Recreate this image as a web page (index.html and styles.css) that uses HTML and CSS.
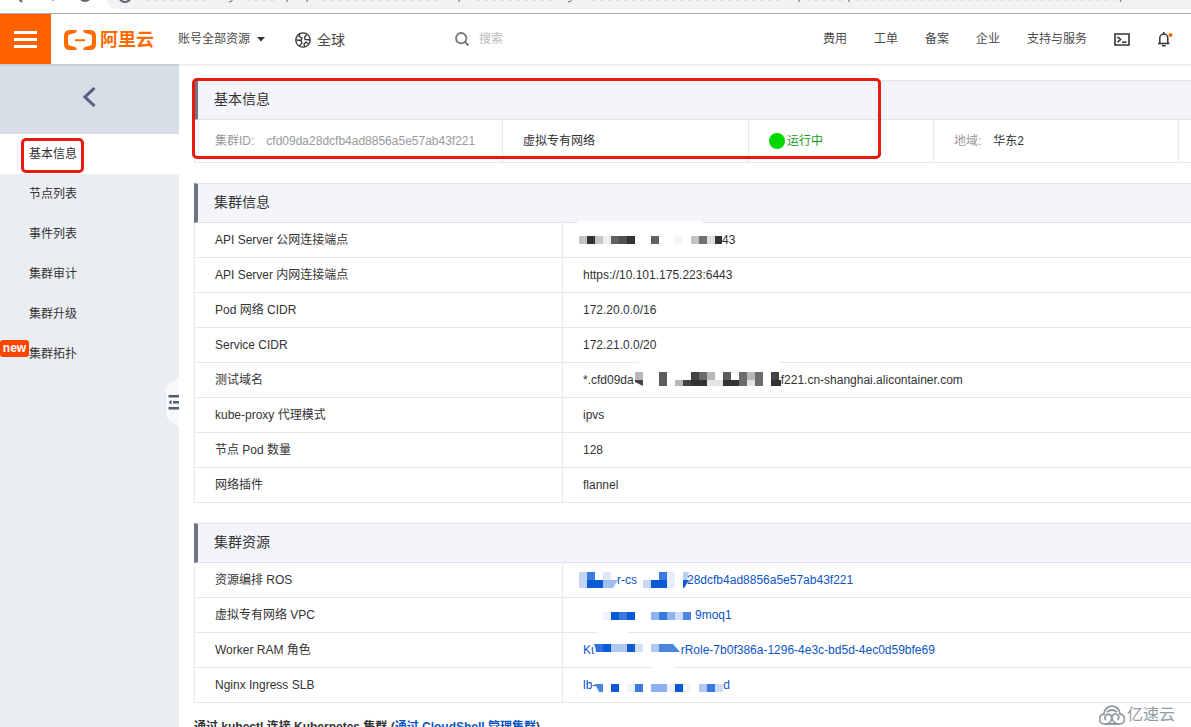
FILE: index.html
```html
<!DOCTYPE html>
<html lang="zh-CN">
<head>
<meta charset="utf-8">
<title>基本信息</title>
<link rel="stylesheet" href="styles.css">
</head>
<body>
<div class="browser-bar">
  <svg class="browser-icons" width="100" height="6" fill="none" stroke="#5f6368" stroke-width="2"><path d="M18-2l4 4M79-5a6 6 0 0 0 12 0"/><path d="M53-1v2" stroke="#aaa"/></svg>
  <div class="address">
    <svg width="1084" height="6" fill="none" stroke="#5f6368" stroke-width="2"><path d="M12-4a6 6 0 0 0 12 0"/><path stroke-width="1" d="M126-1q-1 3-4 3M352-1v3M465-1q-1 3-4 3M180-1v3M200-1v3M692-1v3M742-1v3M1014-1q0 2-1 3"/><path stroke="#c5c7ca" stroke-width="1" stroke-dasharray="3 5" d="M40 0h60M140 0h30M215 0h120M370 0h80M485 0h190M700 0h38M750 0h258"/></svg>
  </div>
</div>

<header class="topbar">
  <button class="menu" aria-label="菜单"><span></span><span></span><span></span></button>
  <a class="logo" href="#">
    <svg width="32" height="20" viewBox="0 0 32 20" fill="#ff6a00"><path d="M13 0H6Q0 0 0 6v8q0 6 6 6h7l-1.500-3L6 15.800Q4 15.500 4 13.500v-7Q4 4.500 6 4.200L11.500 3zM19 0h7q6 0 6 6v8q0 6-6 6h-7l1.500-3 5.500-1.200q2-.3 2-2.300v-7q0-2-2-2.300L20.500 3zM11 9.300h10v2H11z"/></svg>
    <span>阿里云</span>
  </a>
  <button class="account">账号全部资源<svg width="8" height="5"><path d="M0 0h8l-4 4.500z" fill="#333"/></svg></button>
  <button class="region">
    <svg width="16" height="16" viewBox="0 0 16 16" fill="none" stroke="#333" stroke-width="1.300"><circle cx="8" cy="8" r="7.200"/><path d="M5 1.800L4 4.500l3 1.500-1 2.500-4.500-.5M6 8.500l1 2.500-2.500 3M12 2.500L9.500 5l.5 2.500 5 .5M9.500 15L9 12l2-2 2.500 2"/></svg>全球
  </button>
  <label class="search">
    <svg width="15" height="15" viewBox="0 0 15 15" fill="none" stroke="#777" stroke-width="1.800"><circle cx="6.200" cy="6.200" r="5.200"/><path d="M10 10l3.500 3.500"/></svg>
    <input type="text" placeholder="搜索" aria-label="搜索">
  </label>
  <nav class="topnav">
    <a href="#">费用</a><a href="#">工单</a><a href="#">备案</a><a href="#">企业</a><a href="#">支持与服务</a>
    <button aria-label="CloudShell"><svg width="16" height="13" viewBox="0 0 16 13" fill="none" stroke="#333" stroke-width="1.600"><path d="M1 1h14v11H1zM3.500 3.800l3 2.700-3 2.700M8 9.300h4.500"/></svg></button>
    <button aria-label="通知"><svg width="16" height="16" viewBox="0 0 16 16" fill="none" stroke="#333" stroke-width="1.500"><path d="M1 12.500h11.500M2.800 12.500V7a4 4 0 0 1 8 0v5.500M6.800 3V1M5 14.800h3.600"/><circle cx="13.500" cy="4" r="2" fill="#f60" stroke="none"/></svg></button>
  </nav>
</header>

<div class="layout">
  <aside class="sidebar">
    <button class="back" aria-label="返回"><svg width="14" height="20" fill="none" stroke="#546080" stroke-width="3"><path d="M11.500 1L2 10l9.500 9"/></svg></button>
    <nav class="sidenav">
      <a class="active" href="#">基本信息<span class="mark mark-nav"></span></a>
      <a href="#">节点列表</a>
      <a href="#">事件列表</a>
      <a href="#">集群审计</a>
      <a href="#">集群升级</a>
      <a href="#">集群拓扑<span class="badge">new</span></a>
    </nav>
    <button class="collapse" aria-label="收起"><svg width="13" height="50" viewBox="0 0 13 50"><path d="M13 0L2 8Q0 10 0 12v26q0 2 2 4l11 8z" fill="#f8f9fb"/><path d="M2.500 18h10.500v2.500H2.500zM7 24h6v2.500H7zM2.500 30h10.500v2.500H2.500zM5.500 23v4.500l-3-2.250z" fill="#505d6c"/></svg></button>
  </aside>

  <main class="content">
    <section class="panel">
      <h2>基本信息</h2>
      <table class="summary">
        <colgroup><col class="c-id"><col class="c-net"><col class="c-state"><col class="c-area"><col></colgroup>
        <tr><td class="muted"><span class="key">集群ID:</span>cfd09da28dcfb4ad8856a5e57ab43f221</td><td>虚拟专有网络</td><td class="state"><i></i>运行中</td><td><span class="key muted">地域:</span>华东2</td><td></td></tr>
      </table>
      <span class="mark mark-panel"></span>
    </section>

    <section class="panel">
      <h2>集群信息</h2>
      <table class="details">
        <tr><th>API Server 公网连接端点</th><td><div class="value"><svg width="139" height="34"><path fill="#fff" d="M-6-2h126v4H-6z"/><path fill="#c4c4c4" d="M-4 13h8v8h-8zM12 13h8v8h-8zM108 13h8v8h-8z"/><path fill="#333" d="M4 13h8v8H4zM44 13h8v8h-8zM132 13h7v8h-7z"/><path fill="#eee" d="M20 13h8v8h-8z"/><path fill="#606060" d="M28 13h8v8h-8zM68 13h8v8h-8z"/><path fill="#505050" d="M36 13h8v8h-8z"/><path fill="#f5f5f5" d="M92 13h8v8h-8z"/><path fill="#707070" d="M116 13h8v8h-8z"/><path fill="#ddd" d="M124 13h8v8h-8z"/></svg>43</div></td></tr>
        <tr><th>API Server 内网连接端点</th><td>https://10.101.175.223:6443</td></tr>
        <tr><th>Pod 网络 CIDR</th><td>172.20.0.0/16</td></tr>
        <tr><th>Service CIDR</th><td>172.21.0.0/20</td></tr>
        <tr><th>测试域名</th><td><div class="value">*.cfd09da<svg width="147" height="34"><path fill="#fff" d="M5-2h140v4H5z"/><path fill="#b8b8b8" d="M1 9h8v8H1zM41 17h8v6h-8zM73 9h8v8h-8zM113 9h8v8h-8z"/><path fill="#444" d="M1 17h8v6l-8-4zM49 17h8v6h-8zM57 9h8v8h-8zM137 9h8v8h-8z"/><path fill="#5c5c5c" d="M25 9h8v14h-8zM89 9h8v8h-8z"/><path fill="#333" d="M57 17h16v6H57zM89 17h16v6H89zM137 17h10v6h-10z"/><path fill="#6c6c6c" d="M65 9h8v8h-8zM105 9h8v14h-8zM121 9h8v14h-8z"/><path fill="#e4e4e4" d="M73 17h16v6H73zM113 17h8v6h-8z"/></svg>f221.cn-shanghai.alicontainer.com</div></td></tr>
        <tr><th>kube-proxy 代理模式</th><td>ipvs</td></tr>
        <tr><th>节点 Pod 数量</th><td>128</td></tr>
        <tr><th>网络插件</th><td>flannel</td></tr>
      </table>
    </section>

    <section class="panel">
      <h2>集群资源</h2>
      <table class="details">
        <tr><th>资源编排 ROS</th><td><a class="value" href="#"><svg width="34" height="34"><path fill="#c4d4f5" d="M-4 9h8v16h-8z"/><path fill="#3a7ae0" d="M4 9h8v8H4z"/><path fill="#0a5ad8" d="M4 17h16v8H4z"/><path fill="#dfe8fa" d="M20 9h8v8h-8z"/><path fill="#a0bdf0" d="M20 17h15l-5 8H20z"/></svg>r-cs<svg width="50" height="34"><path fill="#c8d8f4" d="M6 17h8v8H6z"/><path fill="#0a5ad8" d="M14 17h16v8H14zM46 17h6l-5 8h-1z"/><path fill="#3a7ae0" d="M22 9h8v8h-8z"/><path fill="#e8effc" d="M30 9h8v16h-8z"/><path fill="#b8cdf3" d="M46 9h6l-2 8h-4z"/></svg>28dcfb4ad8856a5e57ab43f221</a></td></tr>
        <tr><th>虚拟专有网络 VPC</th><td><a class="value" href="#"><svg width="112" height="34"><path fill="#f0f3fc" d="M20 14h8v8h-8z"/><path fill="#0a5ad8" d="M28 14h8v8h-8zM44 14h8v8h-8z"/><path fill="#3a7ae0" d="M36 14h8v8h-8zM76 14h8v8h-8z"/><path fill="#8fb4f0" d="M68 14h8v8h-8zM84 14h8v8h-8z"/><path fill="#cfdcf8" d="M92 14h8v8h-8z"/><path fill="#4a86e0" d="M100 14h8v8h-8z"/></svg>9moq1</a></td></tr>
        <tr><th>Worker RAM 角色</th><td><a class="value" href="#">Ku<svg width="83" height="34"><path fill="#fff" d="M0-2h29v4H0zM-4 19H3v6h-7z"/><path fill="#3070e0" d="M-4 11h9v8H-1z"/><path fill="#0a5ad8" d="M5 11h8v8H5zM29 11h8v8h-8z"/><path fill="#b0c8f0" d="M13 11h16v8H13zM53 11h8v8h-8z"/><path fill="#d3dff6" d="M37 11h8v8h-8z"/><path fill="#4a86e0" d="M61 11h14l7 8H61z"/></svg>rRole-7b0f386a-1296-4e3c-bd5d-4ec0d59bfe69</a></td></tr>
        <tr><th>Nginx Ingress SLB</th><td><a class="value" href="#">lb-<svg width="127" height="34"><path fill="#fff" d="M56-2h23v4H56z"/><path fill="#4a86e0" d="M-1 16h8v8H3z"/><path fill="#0a5ad8" d="M15 16h8v8h-8zM79 16h8v8h-8z"/><path fill="#edf2fc" d="M31 16h8v8h-8zM71 16h8v8h-8zM87 16h8v8h-8z"/><path fill="#3a7ae0" d="M39 16h8v8h-8zM111 16h8v8h-8z"/><path fill="#8fb0f0" d="M55 16h16v8H55z"/><path fill="#b0c8f0" d="M103 16h8v8h-8z"/><path fill="#cfdcf8" d="M119 16h8v8h-8z"/></svg>d</a></td></tr>
      </table>
    </section>

    <h3 class="connect">通过 kubectl 连接 Kubernetes 集群 (<a href="#">通过 CloudShell 管理集群</a>)</h3>
  </main>
</div>

<div class="watermark">
  <svg width="26" height="20" viewBox="0 0 26 20" fill="none" stroke="#929aa3" stroke-width="1.800"><path d="M6 19a5 5 0 0 1-1-10C5 4 9 1.200 13 1.200S21 4 21 9a5 5 0 0 1-1 10z"/><path d="M6 19c4 0 6.500-2.500 6.500-5.500A3.300 3.300 0 1 0 7 15M20 19c-4 0-7-3-7-6.500a3.400 3.400 0 1 1 5.500 2.500M8 7q5-4 10 0"/></svg>
  <span>亿速云</span>
</div>
</body>
</html>
```

FILE: styles.css
```css
* {
  box-sizing: border-box;
}

body {
  margin: 0;
  height: 100vh;
  overflow: hidden;
  position: relative;
  display: flex;
  flex-direction: column;
  background: #fff;
  color: #333;
  font: 12px/20px "Liberation Sans", "Noto Sans CJK SC", sans-serif;
}

a {
  color: inherit;
  text-decoration: none;
}

button {
  border: 0;
  padding: 0;
  background: none;
  color: inherit;
  font: inherit;
}

svg {
  flex: none;
}

.browser-bar {
  flex: none;
  display: flex;
  height: 14px;
  border-bottom: 1px solid #aaacaf;
}

.browser-icons {
  margin-right: 7px;
}

.address {
  flex: 1;
  height: 9px;
  overflow: hidden;
  background: #f1f2f4;
  border-bottom-left-radius: 12px;
}

.address svg,
.browser-icons {
  display: block;
}

.topbar {
  flex: none;
  display: flex;
  align-items: center;
  height: 50px;
  position: relative;
  box-shadow: 0 1px 2px rgba(0, 0, 0, 0.12);
  color: #4a4a4a;
  z-index: 2;
}

.menu {
  display: flex;
  flex-direction: column;
  align-items: center;
  justify-content: center;
  gap: 4px;
  width: 51px;
  height: 50px;
  background: #ff6000;
}

.menu span {
  width: 23px;
  height: 3px;
  background: #fff;
}

.logo {
  display: flex;
  align-items: center;
  gap: 4px;
  width: 91px;
  margin: 2px 23px 0 13px;
  color: #ff6a00;
  font-size: 18px;
  font-weight: 700;
  white-space: nowrap;
}

.account {
  display: flex;
  align-items: center;
  gap: 7px;
  margin-right: 30px;
}

.region {
  display: flex;
  align-items: center;
  gap: 6px;
  margin-top: 2px;
  font-size: 14px;
}

.search {
  flex: 1;
  display: flex;
  align-items: center;
  gap: 9px;
  margin-left: 110px;
}

.search input {
  width: 200px;
  border: 0;
  padding: 0;
  background: none;
  outline: 0;
  font: inherit;
}

.search input::placeholder {
  color: #bbb;
}

.topnav {
  display: flex;
  align-items: center;
  gap: 27px;
  padding-right: 18px;
}

.topnav svg {
  display: block;
}

.layout {
  flex: 1;
  display: flex;
  min-height: 0;
}

.sidebar {
  flex: none;
  width: 179px;
  position: relative;
  background: #eaedf2;
}

.back {
  display: flex;
  align-items: center;
  justify-content: center;
  width: 100%;
  height: 70px;
  padding-bottom: 4px;
  background: #d8dee7;
}

.sidenav a {
  display: block;
  position: relative;
  height: 40px;
  padding-left: 29px;
  line-height: 40px;
}

.sidenav .active {
  background: #fff;
}

.badge {
  position: absolute;
  left: 0;
  top: 6px;
  width: 29px;
  height: 17px;
  border-radius: 3px;
  background: #ff4400;
  color: #fff;
  font-weight: 700;
  line-height: 17px;
  text-align: center;
}

.collapse {
  position: absolute;
  right: 0;
  top: 313px;
}

.collapse svg {
  display: block;
}

.mark {
  position: absolute;
  border: 3px solid #e8190f;
  border-radius: 5px;
  pointer-events: none;
}

.mark-nav {
  left: 21px;
  top: 4px;
  width: 63px;
  height: 35px;
}

.mark-panel {
  left: -2px;
  top: -2px;
  width: 689px;
  height: 81px;
}

.content {
  flex: 1;
  min-width: 0;
  padding: 16px 0 0 15px;
}

.panel {
  position: relative;
  margin-bottom: 20px;
}

.panel h2 {
  height: 40px;
  margin: 0;
  padding-left: 16px;
  border: solid #e0e4ea;
  border-width: 1px 0;
  border-left: 4px solid #6d7580;
  background: #f4f5fa;
  font-size: 14px;
  font-weight: 400;
  line-height: 36px;
}

table {
  width: 100%;
  border-spacing: 0;
  table-layout: fixed;
  border-left: 1px solid #e6e8ec;
}

th,
td {
  height: 35px;
  padding: 0 0 0 20px;
  border-bottom: 1px solid #e6e8ec;
  font-weight: 400;
  text-align: left;
  white-space: nowrap;
}

.details th {
  width: 368px;
  border-right: 1px solid #e6e8ec;
}

.value {
  display: flex;
  align-items: center;
  height: 34px;
}

.value svg {
  overflow: visible;
}

.details a,
.connect a {
  color: #0b55c4;
}

.summary td {
  height: 43px;
  border-right: 1px solid #e6e8ec;
}

.summary td:last-child {
  border-right: 0;
}

.c-id {
  width: 308px;
}

.c-net {
  width: 246px;
}

.c-state {
  width: 185px;
}

.c-area {
  width: 245px;
}

.key {
  margin-right: 12px;
}

.muted {
  color: #999;
}

.state {
  color: #1a9a1a;
}

.state i {
  display: inline-block;
  width: 16px;
  height: 16px;
  margin-right: 2px;
  border-radius: 50%;
  background: #00d800;
  vertical-align: -4px;
}

.connect {
  margin: -6px 0 0;
  font-size: 12px;
  line-height: 20px;
}

.watermark {
  position: absolute;
  right: 16px;
  bottom: 2px;
  display: flex;
  align-items: center;
  gap: 2px;
  color: #929aa3;
  font-size: 16px;
}
```
